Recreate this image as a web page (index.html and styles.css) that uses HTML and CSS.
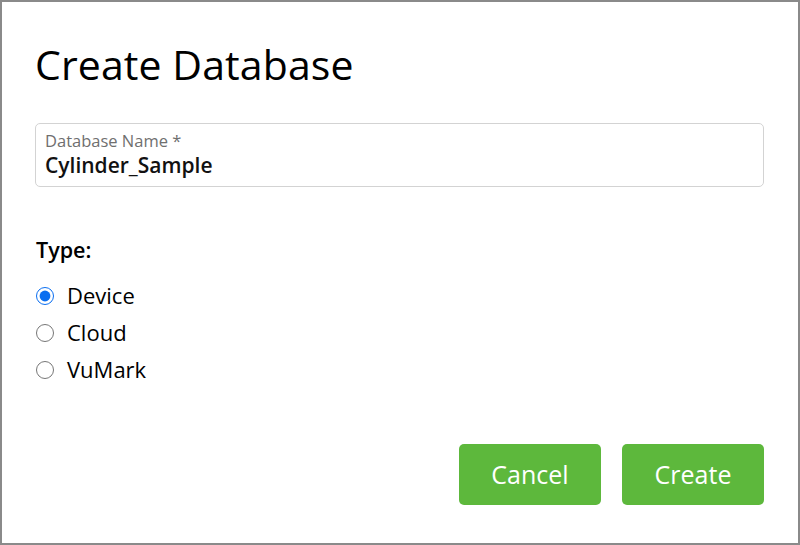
FILE: index.html
```html
<!DOCTYPE html>
<html lang="en">
<head>
    <meta charset="UTF-8">
    <title>Create Database</title>
    <link rel="stylesheet" href="styles.css">
</head>
<body>
    <div class="dialog">
        <h1>Create Database</h1>

        <div class="field">
            <label for="db-name">Database Name *</label>
            <input type="text" id="db-name" value="Cylinder_Sample">
        </div>

        <div class="type-group">
            <div class="type-title">Type:</div>
            <label class="radio"><input type="radio" name="type" checked> Device</label>
            <label class="radio"><input type="radio" name="type"> Cloud</label>
            <label class="radio"><input type="radio" name="type"> VuMark</label>
        </div>

        <div class="actions">
            <button class="btn">Cancel</button>
            <button class="btn">Create</button>
        </div>
    </div>
</body>
</html>
```

FILE: styles.css
```css
html, body {
    margin: 0;
    padding: 0;
    height: 100%;
}
body {
    font-family: "Open Sans", "Noto Sans", sans-serif;
    color: #000;
    background: #fff;
}
.dialog {
    box-sizing: border-box;
    height: 545px;
    border: 2px solid #8a8a8a;
    padding: 0 34px 0 33px;
    display: flex;
    flex-direction: column;
}
h1 {
    font-weight: 400;
    font-size: 41px;
    margin: 36px 0 0 0;
    line-height: 52px;
    letter-spacing: 0.1px;
}
.field {
    margin-top: 33px;
    border: 1px solid #d3d3d3;
    border-radius: 5px;
    padding: 7px 9px 6px;
    display: flex;
    flex-direction: column;
}
.field label {
    font-size: 16.5px;
    color: #6f6f6f;
    line-height: 20px;
}
.field input {
    border: none;
    outline: none;
    padding: 0;
    margin: 0;
    font-family: inherit;
    font-size: 21px;
    font-weight: 600;
    color: #111;
    line-height: 29px;
}
.type-group {
    margin-top: 49px;
    display: flex;
    flex-direction: column;
}
.type-title {
    font-size: 21.5px;
    font-weight: 600;
    line-height: 28px;
    margin: 0 0 13px 1px;
}
.radio {
    display: flex;
    align-items: center;
    font-size: 22px;
    line-height: 37px;
    gap: 13px;
}
.radio input {
    width: 18px;
    height: 18px;
    margin: 0 0 0 1px;
    accent-color: #0a6ef0;
}
.actions {
    margin-top: auto;
    margin-bottom: 38px;
    display: flex;
    justify-content: flex-end;
    gap: 21px;
}
.btn {
    width: 142px;
    height: 61px;
    border: none;
    border-radius: 5px;
    background: #5db83c;
    color: #fff;
    font-family: inherit;
    font-size: 25px;
    padding-bottom: 2px;
    cursor: pointer;
}
```
